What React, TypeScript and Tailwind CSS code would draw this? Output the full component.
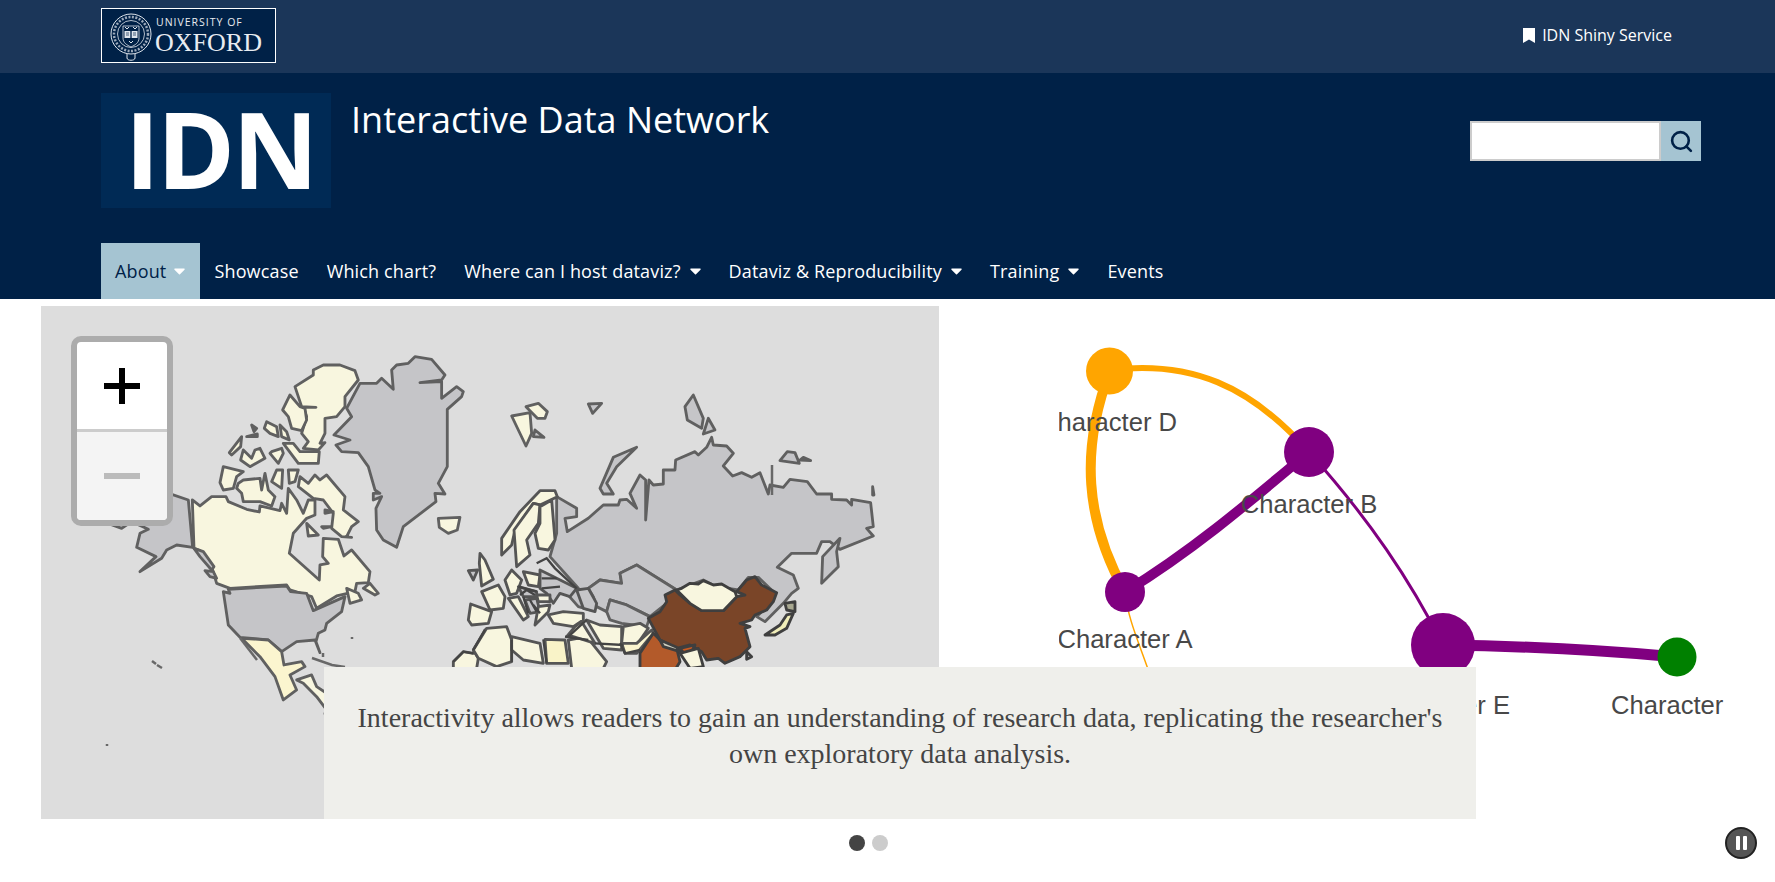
import { Search } from "lucide-react";

const navItems = [
  { label: "About", caret: true, active: true },
  { label: "Showcase" },
  { label: "Which chart?" },
  { label: "Where can I host dataviz?", caret: true },
  { label: "Dataviz & Reproducibility", caret: true },
  { label: "Training", caret: true },
  { label: "Events" },
];

const GREY = "#c5c5c8";
const CREAM = "#f8f6df";
const PALE = "#fbf5cf";

// north america, traced at 3x from page offset 30,300
const americas: [string, string][] = [
  ["410,578 475,600 488,742 440,735 410,750 395,775 330,815 378,770 320,742 330,700 355,688 305,665 275,685 228,668 230,640 400,578", GREY],
  ["487,600 510,618 545,590 588,590 595,605 650,628 688,636 690,618 750,632 755,610 770,640 775,565 800,600 820,640 835,600 855,600 855,645 830,655 790,700 778,760 868,840 870,795 895,790 878,770 880,715 925,718 942,768 965,750 1020,815 1015,848 980,850 975,875 920,888 860,925 845,890 780,870 770,855 600,865 560,850 545,800 510,752 492,745", CREAM],
  ["492,745 520,755 552,800 545,810 510,770", GREY],
  ["525,812 550,815 560,835 540,830", GREY],
  ["810,530 835,550 855,525 870,540 890,525 945,590 940,630 985,665 965,680 950,710 965,712 935,710 905,685 910,640 880,600 850,595 805,560", CREAM],
  ["850,210 880,195 930,195 975,212 985,240 945,290 945,320 920,350 885,355 885,400 870,430 885,428 865,450 820,445 835,425 815,400 830,350 820,322 858,322 815,320 795,260 850,225", CREAM],
  ["780,285 810,320 825,325 830,360 815,392 785,385 775,350 758,330", CREAM],
  ["710,365 740,380 745,410 720,400 703,385", CREAM],
  ["750,375 770,395 778,420 755,410", CREAM],
  ["665,375 680,385 672,395", GREY],
  ["650,410 682,402 682,410", GREY],
  ["635,410 632,440 605,465 598,458", CREAM],
  ["640,450 665,475 675,450 690,445 705,475 660,500 632,480", CREAM],
  ["725,455 755,445 760,460 745,490 720,460", CREAM],
  ["760,430 805,490 865,490 868,455 810,455 790,430", CREAM],
  ["580,500 640,515 620,530 610,565 580,570 570,548", CREAM],
  ["625,550 640,540 690,535 695,570 705,520 715,570 735,590 725,618 690,605 640,605 635,580 620,565", CREAM],
  ["740,510 758,510 755,565 725,545", CREAM],
  ["775,510 805,510 795,545 778,550", CREAM],
  ["830,670 865,705 835,708", CREAM],
  ["885,630 910,635 885,640", CREAM],
  ["875,680 905,680 880,685", CREAM],
  ["1020,850 1045,880 1035,885 1000,865", CREAM],
  ["950,865 985,880 995,900 960,910", CREAM],
  ["1225,655 1290,652 1282,690 1255,700 1228,682", CREAM],
  ["990,250 1040,250 1055,235 1090,268 1085,210 1100,195 1135,190 1155,170 1205,178 1245,225 1235,240 1170,248 1235,245 1235,295 1280,260 1300,275 1295,290 1252,328 1252,500 1225,550 1245,582 1215,580 1218,605 1120,680 1100,742 1060,720 1040,690 1038,625 1055,590 1030,600 1030,580 1050,580 1035,570 1015,500 985,458 935,455 918,435 960,420 912,405 965,350 950,325", GREY],
  ["580,875 600,880 595,868 770,858 782,875 830,880 850,932 945,890 935,935 890,970 885,990 865,1000 858,1025 870,1058 855,1020 800,1025 755,1055 715,1020 630,1012 595,975", GREY],
  ["635,1015 715,1020 755,1055 762,1095 815,1085 825,1100 780,1125 800,1170 760,1200 735,1130 690,1070", PALE],
  ["800,1140 845,1125 860,1160 890,1180 890,1230 860,1190 820,1150", CREAM],
  ["885,1240 900,1210 915,1240 915,1320 890,1260", CREAM],
];

// eurasia, traced at 3x from page offset 450,340
const eurasia: [string, string][] = [
  ["320,470 380,505 380,530 345,535 352,575 415,535 460,495 505,495 510,480 530,478 560,505 540,460 570,405 587,420 587,540 597,420 610,435 640,432 640,390 675,390 677,360 735,335 745,345 770,322 785,292 790,315 830,318 850,340 820,378 848,408 875,398 905,412 930,398 955,462 960,435 1000,442 1020,418 1072,425 1100,462 1145,462 1145,478 1190,480 1205,495 1205,478 1262,488 1270,560 1250,565 1270,588 1170,628 1140,605 1115,605 1100,640 1025,640 982,682 1030,705 1045,745 1025,760 1000,790 945,845 920,830 960,790 975,760 925,712 895,712 865,750 800,740 760,720 720,735 680,750 560,675 510,700 515,730 450,720 415,745 430,770 420,810 385,800 350,760 385,745 300,650 320,580", GREY],
  ["415,745 450,720 515,730 510,700 560,675 680,750 650,790 600,830 570,815 530,795 480,780 470,815 440,800 430,770", GREY],
  ["470,815 480,780 530,795 570,815 600,830 590,860 515,850 480,840", GREY],
  ["185,228 240,218 245,280 228,318", CREAM],
  ["228,200 265,190 292,215 285,235 262,235", CREAM],
  ["255,270 282,292 250,290", GREY],
  ["415,192 455,190 428,220", GREY],
  ["450,445 490,352 560,322 500,380 470,430 490,462 460,462", GREY],
  ["730,165 705,200 712,240 755,265 760,235", GREY],
  ["775,235 795,270 760,282", GREY],
  ["990,362 1012,335 1035,338 1048,370", GREY],
  ["1050,360 1082,362 1060,352", GREY],
  ["1170,595 1118,650 1115,730 1165,680 1160,635", GREY],
  ["1268,440 1272,465 1268,465", GREY],
];

// europe, africa and the middle east, traced at 3x from page offset 440,480
const europe: [string, string][] = [
  ["300,32 345,32 352,50 300,75 280,70 225,150 215,195 185,225 185,175 240,95", CREAM],
  ["280,70 300,75 295,130 260,180 270,225 230,260 222,150", CREAM],
  ["300,80 335,60 345,180 325,210 295,205 285,160 300,130", CREAM],
  ["120,220 135,240 160,298 125,318 118,250", CREAM],
  ["85,272 113,270 100,300", GREY],
  ["125,335 175,315 195,350 190,385 150,390", CREAM],
  ["92,372 155,395 145,430 95,435 85,420", CREAM],
  ["195,300 215,270 245,300 230,340 210,345", CREAM],
  ["250,275 300,285 295,320 265,315", CREAM],
  ["300,270 350,295 410,325 390,350 360,340 340,370 320,340 300,325", GREY],
  ["205,355 235,350 265,410 250,420", CREAM],
  ["235,320 290,335 290,350 250,350", GREY],
  ["290,345 330,345 330,365 295,365", CREAM],
  ["255,360 290,355 300,395 270,400", GREY],
  ["295,380 330,375 325,395 285,435", CREAM],
  ["325,405 370,395 430,400 430,420 400,440 340,430", CREAM],
  ["40,545 70,515 100,520 135,450 100,510 115,535 110,565 40,565", CREAM],
  ["100,510 140,445 200,440 215,480 215,545 170,560 115,535", CREAM],
  ["215,470 300,490 310,550 250,540 215,510", CREAM],
  ["315,478 375,480 385,550 320,550", "#f9f3c8"],
  ["385,480 440,470 500,545 490,565 395,565", CREAM],
  ["380,470 405,440 425,425 465,490 385,465", CREAM],
  ["440,420 480,435 545,440 545,510 490,505", CREAM],
  ["550,440 600,430 625,445 590,495 545,490", CREAM],
  ["545,490 590,490 635,450 640,460 590,520 555,520", PALE],
  ["410,330 445,325 470,370 465,395 430,385", GREY],
];

// china and neighbours, traced at 3x from page offset 640,560
const china: [string, string][] = [
  ["0,280 40,220 60,240 110,265 120,305 105,330 0,330", "#b35a2a"],
  ["105,90 120,105 150,130 185,152 250,152 290,110 315,105 290,95 320,60 345,50 365,75 410,98 400,125 380,150 345,165 335,180 300,190 330,200 315,205 330,260 300,290 255,310 235,295 200,300 185,275 150,255 110,265 60,240 25,175 60,155 80,125 75,105", "#7a4528"],
  ["110,90 125,85 150,70 175,72 190,62 220,75 245,72 285,95 290,110 250,152 185,152 150,130", CREAM],
  ["60,240 110,262 120,275 70,260", "#d0d0c0"],
  ["120,265 165,255 145,295", "#c85a22"],
  ["120,280 175,265 190,320 150,325", CREAM],
  ["375,225 420,195 440,165 460,160 440,205 405,225", "#f1eeb9"],
  ["435,130 465,125 465,155 440,150", "#a8a890"],
  ["320,275 335,290 320,298", GREY],
];

function Shapes({ data, x, y, stroke = "#606060" }: { data: [string, string][]; x: number; y: number; stroke?: string }) {
  return (
    <g transform={`translate(${x} ${y}) scale(0.3333)`} stroke={stroke} strokeWidth="8.5" strokeLinejoin="round">
      {data.map(([points, fill]) => (
        <polygon key={points} points={points} fill={fill} />
      ))}
    </g>
  );
}

function WorldMap() {
  return (
    <svg viewBox="41 306 898 513" className="h-[513px] w-[898px] shrink-0 bg-[#dddddd] blur-[0.4px]">
      <Shapes data={americas} x={30} y={300} />
      <Shapes data={eurasia} x={450} y={340} />
      <Shapes data={europe} x={440} y={480} stroke="#555" />
      <Shapes data={china} x={640} y={560} stroke="#3f3f3f" />
      <g transform="translate(440 480) scale(0.3333)" stroke="#444" strokeWidth="7" fill="none">
        <path d="M235 320 L290 335 M250 350 L265 400 M270 360 L290 395 M280 375 L300 400 M240 345 L260 330 L285 345 M290 250 L320 235 L345 265 L410 325 M305 295 L350 295 M305 325 L360 320 M40 545 L70 515 L100 520 M135 450 L100 510 M215 480 L215 545 M310 478 L320 550 M385 470 L440 420 M375 470 L445 480 M465 490 L550 495 M540 490 L555 520 L600 510" />
      </g>
      <g stroke="#686868" strokeWidth="2.5" fill="none">
        <path d="M240 638 L257 660" />
        <path d="M312 658 L332 665 L345 667" />
        <path d="M323 653 L323 657" />
        <path d="M152 661 L156 664 M157 665 L162 668" />
        <path d="M107 744 L107 746" />
        <path d="M352 637 L352 639" />
        <path d="M772 465 L772 495" />
      </g>
    </svg>
  );
}

function ZoomControl() {
  return (
    <div className="absolute left-[30px] top-[30px] flex h-[190px] w-[102px] flex-col overflow-hidden rounded-[10px] border-[6px] border-[#acacac] bg-white">
      <div className="flex h-[90px] items-center justify-center border-b-[3px] border-[#ccc]">
        <svg width="36" height="36" viewBox="0 0 36 36" fill="#000">
          <rect x="15" y="0" width="6" height="36" />
          <rect x="0" y="15" width="36" height="6" />
        </svg>
      </div>
      <div className="flex flex-1 items-center justify-center bg-[#f4f4f4]">
        <div className="h-[6px] w-[36px] bg-[#bbb]" />
      </div>
    </div>
  );
}

function NetworkChart() {
  const label = "fill-[#484848] text-[25.6px] [font-family:'Liberation_Sans',Arial,sans-serif]";
  return (
    <svg viewBox="939 306 836 513" className="h-[513px] w-[836px] shrink-0">
      <defs>
        <clipPath id="chart-clip">
          <rect x="1059" y="305" width="716" height="514" />
        </clipPath>
      </defs>
      <g fill="none" clipPath="url(#chart-clip)">
        <path d="M1110 370 C1190 360 1250 385 1309 452" stroke="#ffa500" strokeWidth="6" />
        <path d="M1110 371 C1080 450 1085 520 1125 592" stroke="#ffa500" strokeWidth="10" />
        <path d="M1125 592 C1128 620 1140 645 1150 675" stroke="#ffa500" strokeWidth="1.5" />
        <path d="M1125 592 C1190 552 1240 510 1309 452" stroke="#800080" strokeWidth="10" />
        <path d="M1309 452 C1370 520 1410 580 1443 645" stroke="#800080" strokeWidth="3" />
        <path d="M1443 645 C1520 646 1600 650 1677 657" stroke="#800080" strokeWidth="11" />
        <circle cx="1109.5" cy="371" r="23.5" fill="#ffa500" />
        <circle cx="1309" cy="452" r="25" fill="#800080" />
        <circle cx="1125" cy="592" r="20" fill="#800080" />
        <circle cx="1443" cy="645" r="32" fill="#800080" />
        <circle cx="1677" cy="657" r="19.5" fill="#008000" />
        <text x="1177" y="431" textAnchor="end" className={label}>Character D</text>
        <text x="1309" y="513" textAnchor="middle" className={label}>Character B</text>
        <text x="1125" y="648" textAnchor="middle" className={label}>Character A</text>
        <text x="1510" y="714" textAnchor="end" className={label}>Character E</text>
        <text x="1611" y="714" className={label}>Character</text>
      </g>
    </svg>
  );
}

function OxfordLogo() {
  return (
    <div className="flex h-[55px] w-[175px] items-start border border-white bg-[#002147]">
      <svg width="44" height="50" viewBox="0 0 44 50" className="ml-[7px] mt-[3px] shrink-0" fill="none" stroke="#dfe5ec">
        <circle cx="22" cy="22" r="20" strokeWidth="1" />
        <circle cx="22" cy="22" r="17" strokeWidth="2.5" strokeDasharray="2 1.5" opacity="0.7" />
        <circle cx="22" cy="22" r="13.5" strokeWidth="0.8" />
        <path d="M14 14 H30 V26 C30 31 26 33 22 35 C18 33 14 31 14 26 Z" strokeWidth="0.8" />
        <rect x="15.5" y="19" width="6" height="7" fill="#dfe5ec" stroke="none" />
        <rect x="22.5" y="19" width="6" height="7" fill="#dfe5ec" stroke="none" />
        <path d="M22 19 V26 M17 21 H20 M17 23 H20 M24 21 H27 M24 23 H27" stroke="#002147" strokeWidth="0.7" />
        <path d="M16 15 L18 17 L20 15 M24 15 L26 17 L28 15 M20 29 L22 31 L24 29" strokeWidth="1" />
        <path d="M18 42 V46 C18 49 26 49 26 46 V42" strokeWidth="1" />
      </svg>
      <div className="ml-[3px] flex flex-col text-[#e8ecf1]">
        <span className="mt-[7px] text-[10.5px] leading-[13px] tracking-[1px] [font-family:'Open_Sans',sans-serif]">UNIVERSITY OF</span>
        <span className="-ml-[1px] text-[26px] leading-[28px] [font-family:'Liberation_Serif',serif]">OXFORD</span>
      </div>
    </div>
  );
}

export default function App() {
  return (
    <div className="relative h-[882px] overflow-hidden bg-white [font-family:'Open_Sans',sans-serif]">
      <div className="flex h-[73px] items-start justify-between bg-[#1b3659] pl-[101px] pr-[103px] pt-[8px]">
        <OxfordLogo />
        <a className="mt-[15px] flex items-center gap-[7px] text-[16px] text-white">
          <svg width="12" height="15" viewBox="0 0 12 15" fill="#fff">
            <path d="M0 0H12V15L6 11.5L0 15Z" />
          </svg>
          IDN Shiny Service
        </a>
      </div>

      <header className="flex h-[226px] flex-col justify-between bg-[#002147] pl-[101px]">
        <div className="flex items-start justify-between pr-[74px] pt-[20px]">
          <div className="flex items-start gap-[20px]">
            <div className="flex h-[115px] w-[230px] items-center justify-center bg-[#002a55] pb-[6px] pl-[8px] text-[106px] font-bold leading-none tracking-[-3px] text-white">
              IDN
            </div>
            <h1 className="mt-[3px] text-[36px] leading-[48px] text-white">Interactive Data Network</h1>
          </div>
          <form className="mt-[28px] flex h-[40px] w-[231px]">
            <input className="h-full w-[191px] border-2 border-[#ccc] bg-white" aria-label="Search" />
            <button type="button" className="flex h-full w-[40px] items-center justify-center bg-[#a5c4d2]">
              <Search size={25} strokeWidth={2.5} color="#002147" />
            </button>
          </form>
        </div>
        <nav className="flex h-[56px] text-[18px] tracking-[0.15px]">
          {navItems.map((item) => (
            <a
              key={item.label}
              className={
                item.active
                  ? "flex items-center gap-[8px] bg-[#a5c4d2] pl-[14px] pr-[15px] text-[#002147]"
                  : "flex items-center gap-[9px] px-[14px] text-white"
              }
            >
              {item.label}
              {item.caret && (
                <svg width="11" height="7" viewBox="0 0 11 7" fill="#fff">
                  <path d="M1 0.5H10C10.6 0.5 10.9 1.2 10.5 1.7L6 6.3C5.7 6.6 5.3 6.6 5 6.3L0.5 1.7C0.1 1.2 0.4 0.5 1 0.5Z" />
                </svg>
              )}
            </a>
          ))}
        </nav>
      </header>

      <section className="relative ml-[41px] mt-[7px] flex h-[513px]">
        <WorldMap />
        <NetworkChart />
        <ZoomControl />
        <div className="absolute bottom-0 left-[283px] h-[152px] w-[1152px] bg-[#efefeb] pt-[33px] text-center text-[28px] leading-[36px] text-[#444] [font-family:'Liberation_Serif',serif]">
          Interactivity allows readers to gain an understanding of research data, replicating the researcher's
          <br />
          own exploratory data analysis.
        </div>
      </section>

      <div className="flex gap-[7px] pl-[849px] pt-[16px]">
        <span className="h-[16px] w-[16px] rounded-full bg-[#444]" />
        <span className="h-[16px] w-[16px] rounded-full bg-[#ccc]" />
      </div>

      <button
        type="button"
        className="absolute left-[1725px] top-[827px] flex h-[32px] w-[32px] items-center justify-center gap-[3px] rounded-full border-2 border-[#222] bg-[#555]"
      >
        <span className="h-[14px] w-[4px] rounded-[1px] bg-white" />
        <span className="h-[14px] w-[4px] rounded-[1px] bg-white" />
      </button>
    </div>
  );
}
